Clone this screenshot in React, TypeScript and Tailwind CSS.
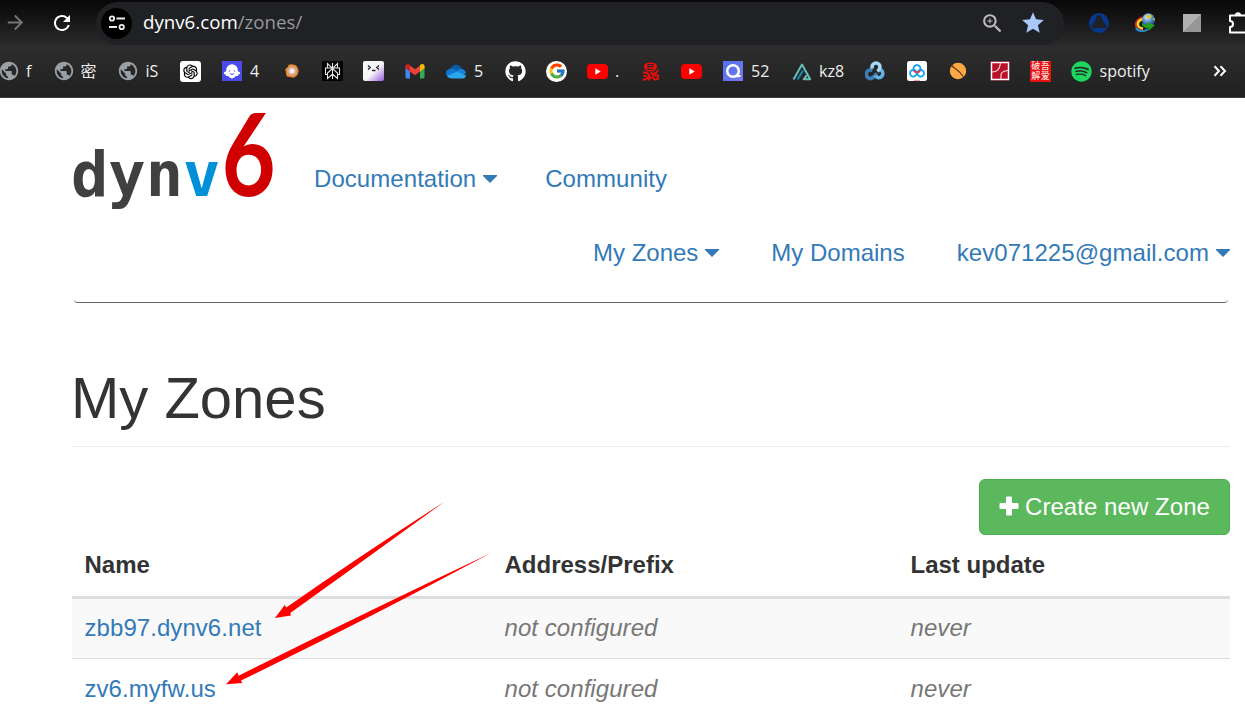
import type { ReactNode } from "react";
import { MdArrowForward, MdRefresh, MdZoomIn, MdStar, MdPublic } from "react-icons/md";
import { FaGithub, FaSpotify } from "react-icons/fa";
import { FcGoogle } from "react-icons/fc";
import { AiOutlineOpenAI } from "react-icons/ai";

function Globe() {
  return <MdPublic className="-m-[1px] size-[22px] text-[#9aa0a6]" />;
}

function Youtube() {
  return (
    <svg viewBox="0 0 21 20" className="h-5 w-[21px]">
      <rect x="0" y="3" width="21" height="15" rx="4" fill="#f00" />
      <path d="M8.3 7.3 13.8 10.5 8.3 13.7Z" fill="#fff" />
    </svg>
  );
}

function OpenAi() {
  return (
    <div className="flex size-[21px] items-center justify-center rounded-[3px] bg-white">
      <AiOutlineOpenAI className="size-[19px] text-black" />
    </div>
  );
}

function Ghost() {
  return (
    <svg viewBox="0 0 20 20" className="size-5">
      <rect width="20" height="20" fill="#4b4bea" />
      <path d="M4.2 9a5.800 5.800 0 0 1 11.600 0c0 1 .2 1.400 1.600 2.100 1.200.6.900 2.300-.7 2.200-.3 1.400-1.500 2-2.900 1.800C12.700 16.900 11 17.400 10 17.400s-2.700-.5-3.800-2.300c-1.400.2-2.600-.4-2.900-1.800-1.600.1-1.900-1.600-.7-2.200C4 10.400 4.200 10 4.200 9Z" fill="#fff" />
      <path d="M7.600 9.600v.9M12.400 9.600v.9" stroke="#4b4bea" strokeWidth="1.300" />
      <path d="M8 12.300c1 1.500 3 1.500 4 0" fill="none" stroke="#4b4bea" strokeWidth="1" />
    </svg>
  );
}

function Flower() {
  return (
    <svg viewBox="0 0 14 14" className="size-[14px]">
      <defs>
        <radialGradient id="petal">
          <stop offset="0.25" stopColor="#f3ecf2" />
          <stop offset="0.65" stopColor="#d3a079" />
          <stop offset="1" stopColor="#ef9228" />
        </radialGradient>
      </defs>
      <path d="M4 1 7.500 .8 11 1.800 12.600 4.500 13.200 7.500 12 11 9 13.200 5.500 12.800 2 12 1.300 8.500.8 5 3 3.500Z" fill="url(#petal)" stroke="#df8624" strokeWidth="1" strokeLinejoin="round" />
    </svg>
  );
}

function Perplexity() {
  return (
    <svg viewBox="0 0 21 20" className="h-5 w-[21px]">
      <rect width="21" height="20" rx="1" fill="#020202" />
      <path d="M10.500 2v16M5.500 2.500v4.500h10V2.500L10.500 7.500ZM5.500 7H3.500v6.500h2V12L10.500 7.500 15.500 12v1.500h2V7h-2M5.500 12v5.500l5-4.500 5 4.500V12" fill="none" stroke="#e4e4e4" strokeWidth="1.100" />
    </svg>
  );
}

function Face() {
  return (
    <svg viewBox="0 0 21 20" className="h-5 w-[21px]">
      <defs>
        <linearGradient id="face" x1="0.35" y1="0.35" x2="1" y2="1">
          <stop offset="0.25" stopColor="#f7f7fb" />
          <stop offset="1" stopColor="#9a5dd8" />
        </linearGradient>
      </defs>
      <rect width="21" height="20" rx="2" fill="url(#face)" />
      <path d="m5 4.500 2.200 2L5 8.500M16 4.500l-2.200 2 2.200 2M9 9.500h3.500" fill="none" stroke="#26262e" strokeWidth="1.400" />
    </svg>
  );
}

function Gmail() {
  return (
    <svg viewBox="0 0 20 20" className="size-5">
      <path d="M.5 5v11a1.500 1.500 0 0 0 1.500 1.500h3V8.200Z" fill="#4285f4" />
      <path d="M19.500 5v11a1.500 1.500 0 0 1-1.500 1.500h-3V8.200Z" fill="#34a853" />
      <path d="M5 4.500 10 8.300l5-3.800v6L10 14.300 5 10.500Z" fill="#ea4335" />
      <path d="M.5 7.200V5.300c0-2.200 2.300-3 4.500-1.300v6.500Z" fill="#c5221f" />
      <path d="M19.500 7.200V5.300c0-2.200-2.300-3-4.500-1.300v6.500Z" fill="#fbbc04" />
    </svg>
  );
}

function Cloud() {
  return (
    <svg viewBox="0 0 20 20" className="size-5">
      <path d="M4 9C5 3 13 1.500 16 8l-5.500 3Z" fill="#0a5aa8" />
      <path d="M3.500 8C6 6.500 9 8 12 11l-6.500 5.800C-1.500 17-1.500 8.500 3.500 8Z" fill="#1078d0" />
      <path d="M10.500 10.500C13 6.500 19.500 7 20 12.500L12 14Z" fill="#1687df" />
      <path d="M1 15 11 10.800l8.500 3.200c.9 2-.8 3.400-2.500 3.400H5.500c-1.500 0-3.400-.8-4.500-2.400Z" fill="#2ba5ed" />
    </svg>
  );
}

function Google() {
  return (
    <div className="flex size-[21px] items-center justify-center rounded-full bg-white">
      <FcGoogle className="size-[18px]" />
    </div>
  );
}

function Octopus() {
  return (
    <svg viewBox="0 0 17 20" className="h-5 w-[17px]" fill="none" stroke="#ee0d0d" strokeWidth="1.900">
      <path d="M2 5C2 .2 15 .2 15 5c0 3-2 4.500-4 5.500H6C4 9.500 2 8 2 5Z" fill="#ee0d0d" stroke="none" />
      <path d="M6 5.700h5V3.500H6v5h5.500" stroke="#2b2b2b" strokeWidth="1.200" />
      <path d="M.8 11.500h3.500l3.200 2.500M16 9l-2 3-4.500 1.200M.8 18.500h3l4-4.500M8.500 11l3 3.500h4.500v3.500l-3 .8-3.500-3M1.500 15h3M8 15.500c.5 2-.5 3-2 3.500" />
    </svg>
  );
}

function Swirl() {
  return (
    <svg viewBox="0 0 20 20" className="size-5">
      <defs>
        <linearGradient id="swirl" x1="0" y1="0" x2="1" y2="1">
          <stop offset="0" stopColor="#5170ef" />
          <stop offset="1" stopColor="#7778ee" />
        </linearGradient>
      </defs>
      <rect width="20" height="20" fill="url(#swirl)" />
      <circle cx="10" cy="10" r="5.800" fill="none" stroke="#fff" strokeWidth="2.500" />
      <path d="M12.500 15.300 17.500 15" fill="none" stroke="#fff" strokeWidth="1.800" />
    </svg>
  );
}

function Peak() {
  return (
    <svg viewBox="0 0 20 20" className="size-5">
      <path d="M1.500 18.500 10 3.500 18.200 18.300h-6.500l3-4" fill="none" stroke="#67bdb3" strokeWidth="2" strokeLinejoin="round" />
      <path d="M5.500 18.500 11 9.500" stroke="#1787b8" strokeWidth="2" />
    </svg>
  );
}

function Knot() {
  return (
    <svg viewBox="0 0 21 20" className="h-5 w-[21px]">
      <g fill="none" strokeWidth="3.600">
        <path d="M7.500 9.500A4.200 4.200 0 1 0 8 16.500L12 12.500" stroke="#3d7eb8" />
        <path d="M10 14.500a4.200 4.200 0 1 0 5.500-5.800" stroke="#62b2e4" />
        <path d="M7 7.500V6a4 4 0 1 1 8 0c-.2 2-1 3.200-2.500 4.500" stroke="#a5d8f3" />
      </g>
    </svg>
  );
}

function Rings() {
  return (
    <svg viewBox="0 0 20 20" className="size-5">
      <rect width="20" height="20" rx="2.500" fill="#fff" />
      <g fill="none" strokeWidth="1.800">
        <circle cx="6.300" cy="12.300" r="3.300" stroke="#10a9ed" />
        <circle cx="13.700" cy="12.300" r="3.300" stroke="#10a9ed" />
        <circle cx="10" cy="7.600" r="3.500" stroke="#0e9df5" />
        <path d="M7 9.500c1.500 2.500 4.500 2.500 6 0" stroke="#f13558" />
      </g>
      <path d="M7 19.500h6" stroke="#fa9eac" strokeWidth="1" />
    </svg>
  );
}

function Bean() {
  return (
    <svg viewBox="0 0 18 18" className="size-[18px]">
      <circle cx="9" cy="9" r="8.200" fill="#fca845" />
      <path d="M2.500 3.500c3 3 7 4 12 11.500" fill="none" stroke="#57350f" strokeWidth="1.100" />
    </svg>
  );
}

function Court() {
  return (
    <svg viewBox="0 0 20 20" className="size-5">
      <rect width="20" height="20" fill="#5d0a16" />
      <rect x="1.500" y="1.500" width="17" height="17" fill="#ba1028" stroke="#fff" strokeWidth="1.500" />
      <path d="M11 18v-4c0-3 2-4 7-4.500M2 11c5 0 7.500-2 8.500-9" fill="none" stroke="#f2dce0" strokeWidth="1.100" />
    </svg>
  );
}

function Seal() {
  return (
    <div className="grid size-[21px] grid-cols-2 bg-[#e51212] px-[1px] text-center font-['Noto_Sans_CJK_SC',sans-serif] text-[9px] leading-[10px] font-medium text-[#ffdada]">
      <span>破</span>
      <span>吾</span>
      <span>解</span>
      <span>爱</span>
    </div>
  );
}

function Spotify() {
  return <FaSpotify className="size-[21px] text-[#1ed760]" />;
}

/* Each slot spans from the left edge of one favicon to the next. */
const bookmarks: { icon: ReactNode; label?: string; slot: string; gap?: string }[] = [
  { icon: <Globe />, label: "f", slot: "w-[54.5px]", gap: "ml-[7px]" },
  { icon: <Globe />, label: "密", slot: "w-16", gap: "ml-[7px]" },
  { icon: <Globe />, label: "iS", slot: "w-[62.5px]", gap: "ml-[8px]" },
  { icon: <OpenAi />, slot: "w-[42px]" },
  { icon: <Ghost />, label: "4", slot: "w-[63px]" },
  { icon: <Flower />, slot: "w-[37px]" },
  { icon: <Perplexity />, slot: "w-[41px]" },
  { icon: <Face />, slot: "w-[42px]" },
  { icon: <Gmail />, slot: "w-[41px]" },
  { icon: <Cloud />, label: "5", slot: "w-[59px]" },
  { icon: <FaGithub className="size-[21px] text-white" />, slot: "w-[41px]" },
  { icon: <Google />, slot: "w-[41px]" },
  { icon: <Youtube />, label: ".", slot: "w-[55px]", gap: "ml-[7px]" },
  { icon: <Octopus />, slot: "w-[39px]" },
  { icon: <Youtube />, slot: "w-[42px]" },
  { icon: <Swirl />, label: "52", slot: "w-[69px]" },
  { icon: <Peak />, label: "kz8", slot: "w-[73px]", gap: "ml-[7px]" },
  { icon: <Knot />, slot: "w-[42px]" },
  { icon: <Rings />, slot: "w-[42px]" },
  { icon: <Bean />, slot: "w-[41px]" },
  { icon: <Court />, slot: "w-10" },
  { icon: <Seal />, slot: "w-[41px]" },
  { icon: <Spotify />, label: "spotify", slot: "w-[141.5px]", gap: "ml-[7.5px]" },
];

function Browser() {
  return (
    <div className="h-[98px] border-b border-[#3b3b3b] bg-linear-to-b from-[#080808] via-[#2d2d2d] via-50% to-[#202020] font-['Open_Sans','Noto_Sans_CJK_SC',sans-serif]">
      <div className="flex h-[45px] items-center">
        <MdArrowForward className="ml-[4px] size-[23px] shrink-0 text-[#777]" />
        <MdRefresh className="ml-[23px] size-[24px] shrink-0 text-white" />
        <div className="mt-px ml-[22px] flex h-[43px] w-[968px] shrink-0 items-center rounded-full bg-[#202124] pl-[5px]">
          <div className="flex size-[31px] items-center justify-center rounded-full bg-black">
            <svg viewBox="0 0 18 16" className="h-4 w-[18px]" fill="none" stroke="#ededed" strokeWidth="1.800">
              <circle cx="4" cy="3.500" r="2.200" />
              <path d="M8.500 3.500H17M1 12h8" />
              <circle cx="13.700" cy="12" r="2.200" />
            </svg>
          </div>
          <span className="mb-[2px] ml-[11px] w-[160px] text-[18.700px] whitespace-nowrap text-white">
            dynv6.com<span className="text-[#96989b]">/zones/</span>
          </span>
          <MdZoomIn className="ml-[677px] size-[25px] text-[#bcbcbc]" />
          <MdStar className="ml-[15px] size-[26px] text-[#a8c7fa]" />
        </div>
        <svg viewBox="0 0 20 20" className="ml-[25px] size-5 shrink-0">
          <circle cx="10" cy="10" r="10" fill="#073890" />
          <path d="M10 2c-2.600 0-2.600 2.700-3.300 4.500C5.500 9.500 2 11.500 2.500 14.300c.4 2.300 4 .8 7.500.8s7.100 1.500 7.500-.8c.5-2.800-3-4.800-4.200-7.800C12.600 4.700 12.600 2 10 2Z" fill="#202126" />
        </svg>
        <svg viewBox="0 0 22 20" className="ml-[25px] h-5 w-[22px] shrink-0">
          <defs>
            <radialGradient id="earth" cx="0.4" cy="0.3" r="0.7">
              <stop offset="0" stopColor="#e8f5ff" />
              <stop offset="0.45" stopColor="#6d9cd2" />
              <stop offset="1" stopColor="#16458f" />
            </radialGradient>
          </defs>
          <g fill="none">
            <path d="M9 4.500C0 6-1 17 9 17.500" stroke="#df2e18" strokeWidth="2" />
            <path d="M10 6C2 7 2 15 9 15.500" stroke="#ffd529" strokeWidth="2.400" />
            <path d="M2 15c2 4 9 4 12 1" stroke="#258bcf" strokeWidth="2" />
          </g>
          <circle cx="14.500" cy="6.800" r="6.500" fill="url(#earth)" />
          <path d="M12 2.500 15 1.500 18 3l-2 2.500-3-.5ZM18.500 6l2-1 .5 3Z" fill="#d4c832" />
          <path d="M8.500 9c.5 2.500 2.500 2.500 4.500 2.500V9.500l8 2.500-6.500 6v-3c-4 0-8-2-6-6Z" fill="#23a01f" />
        </svg>
        <svg viewBox="0 0 18 18" className="ml-[27px] size-[18px] shrink-0">
          <path d="M0 0h18v18H0Z" fill="#969696" />
          <path d="M0 0h18L0 18Z" fill="#b1b1b1" />
        </svg>
        <svg viewBox="0 0 18 24" className="ml-[27px] h-6 w-[18px] shrink-0" fill="none" stroke="#fff" strokeWidth="2">
          <path d="M18 4.500H2V10c2 0 3 1.200 3 3s-1 3-3 3v5.500h16" strokeLinejoin="round" />
          <path d="M7 4.500a3 3.300 0 0 1 6 0Z" fill="#fff" stroke="none" />
        </svg>
      </div>
      <div className="flex h-[52px] items-center">
        {bookmarks.map((b, i) => (
          <div key={i} className={`flex shrink-0 items-center ${b.slot} ${i === 0 ? "-ml-px" : ""}`}>
            <div className="shrink-0">{b.icon}</div>
            {b.label && <span className={`${b.gap ?? "ml-2"} text-base leading-5 text-[#efefef]`}>{b.label}</span>}
          </div>
        ))}
        <svg viewBox="0 0 14 12" className="h-3 w-[14px] shrink-0" fill="none" stroke="#fff" strokeWidth="2">
          <path d="m1.500 1.200 4.500 4.800-4.500 4.800M7.500 1.200 12 6l-4.500 4.800" />
        </svg>
      </div>
    </div>
  );
}

function Caret() {
  return (
    <svg viewBox="0 0 14 8" className="ml-[7px] h-2 w-[14px] fill-current">
      <path d="M0 0h14v1L7 8 0 1Z" />
    </svg>
  );
}

function NavLink({ children, caret, className }: { children: ReactNode; caret?: boolean; className: string }) {
  return (
    <a href="#" className={`flex items-center whitespace-nowrap text-[#337ab7] ${className}`}>
      {children}
      {caret && <Caret />}
    </a>
  );
}

function Logo() {
  return (
    <svg viewBox="0 0 210 112" className="h-28 w-[210px] shrink-0 overflow-visible">
      <text x="-2" y="98" fontFamily="'DejaVu Sans Mono', monospace" fontWeight="700" fontSize="62" fill="#404040">
        dyn<tspan fill="#008fd9">v</tspan>
      </text>
      <text
        transform="translate(148.500 98) scale(.82 1)"
        fontFamily="Lato, sans-serif"
        fontWeight="700"
        fontSize="114"
        fill="#d00000"
      >
        6
      </text>
    </svg>
  );
}

const zones = ["zbb97.dynv6.net", "zv6.myfw.us"];

export default function App() {
  return (
    <div className="relative h-[721px] w-[1245px] overflow-hidden bg-white font-['Liberation_Sans',Arial,sans-serif] text-[24px] text-[#333]">
      <Browser />
      <div className="mr-[15px] ml-[72px]">
        <header className="mx-[2px] h-[205px] rounded-[4px] border-b border-[#666]">
          <div className="-ml-px flex h-28 items-start">
            <Logo />
            <nav className="mt-[64px] ml-[31px] flex h-[34px]">
              <NavLink caret className="tracking-[0.06px]">Documentation</NavLink>
              <NavLink className="ml-12 tracking-[0.06px]">Community</NavLink>
            </nav>
          </div>
          <nav className="mt-[26px] -mr-[2px] flex h-[34px] justify-end">
            <NavLink caret className="">My Zones</NavLink>
            <NavLink className="ml-[52px]">My Domains</NavLink>
            <NavLink caret className="ml-[52px] tracking-[0.06px]">kev071225@gmail.com</NavLink>
          </nav>
        </header>
        <h1 className="mt-[63px] h-[81px] border-b border-[#eee] text-[58px] leading-[64px] -indent-px">My Zones</h1>
        <div className="mt-8 flex justify-end">
          <button className="flex h-14 w-[251px] items-center rounded-[6px] border border-[#4cae4c] bg-[#5cb85c] pl-[19px] tracking-[0.06px] whitespace-nowrap text-white">
            <svg viewBox="0 0 20 20" className="mr-[6px] mb-[2px] size-5 fill-current">
              <path d="M8 .5h4q1 0 1 1V7h5.500q1 0 1 1v4q0 1-1 1H13v5.500q0 1-1 1H8q-1 0-1-1V13H1.500q-1 0-1-1V8q0-1 1-1H7V1.500q0-1 1-1Z" />
            </svg>
            Create new Zone
          </button>
        </div>
        <table className="w-full table-fixed border-collapse text-left">
          <colgroup>
            <col className="w-[420px]" />
            <col className="w-[406px]" />
            <col />
          </colgroup>
          <thead>
            <tr className="h-[62px] border-b-[3px] border-[#ddd]">
              <th className="pl-[12.5px]">Name</th>
              <th className="pl-[12.5px]">Address/Prefix</th>
              <th className="pl-[12.5px]">Last update</th>
            </tr>
          </thead>
          <tbody>
            {zones.map((z) => (
              <tr key={z} className="h-[61px] border-b border-[#ddd] last:h-[62px] last:border-b-0 odd:bg-[#f9f9f9]">
                <td className="pl-[12.5px] tracking-[0.06px]">
                  <a href="#" className="text-[#337ab7]">{z}</a>
                </td>
                <td className="pl-[12.5px] tracking-[0.06px] text-[#777] italic">not configured</td>
                <td className="pl-[12.5px] tracking-[0.06px] text-[#777] italic">never</td>
              </tr>
            ))}
          </tbody>
        </table>
      </div>
      <svg viewBox="0 0 230 190" className="pointer-events-none absolute top-[500px] left-[222px] h-[190px] w-[230px] overflow-visible fill-[#f00]">
        <path d="M53 118 62.700 105 64.300 107.500Q140 54.500 222 2Q146 57.500 68.300 113L69 115.500Z" />
        <path d="M4 184.300 15.300 172.300 16.700 175.700Q140 114 269 53Q144 120 19 180.500L20.300 183Z" />
      </svg>
    </div>
  );
}
